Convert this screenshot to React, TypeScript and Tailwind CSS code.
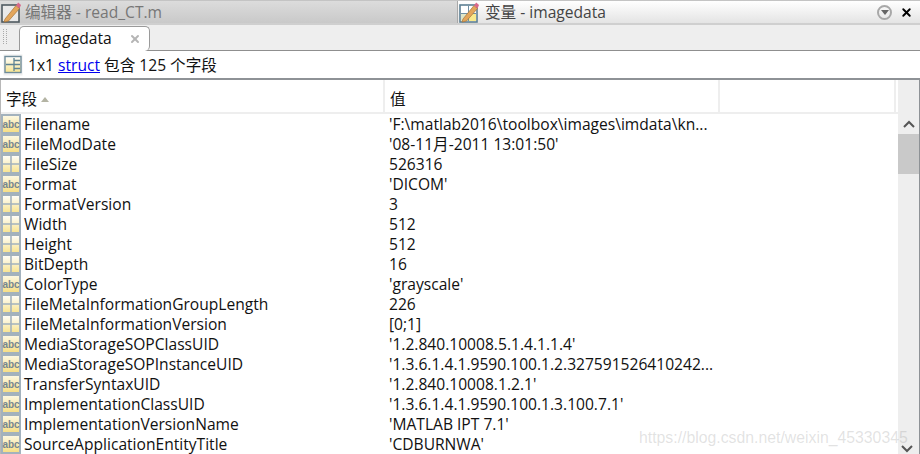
import { X } from 'lucide-react';

const font = { fontFamily: '"Open Sans", "Noto Sans CJK SC", sans-serif' };

// Variable rows: type decides which icon is drawn
const rows = [
  { name: 'Filename', value: "'F:\\matlab2016\\toolbox\\images\\imdata\\kn...", type: 'abc' },
  { name: 'FileModDate', value: "'08-11月-2011 13:01:50'", type: 'abc' },
  { name: 'FileSize', value: '526316', type: 'num' },
  { name: 'Format', value: "'DICOM'", type: 'abc' },
  { name: 'FormatVersion', value: '3', type: 'num' },
  { name: 'Width', value: '512', type: 'num' },
  { name: 'Height', value: '512', type: 'num' },
  { name: 'BitDepth', value: '16', type: 'num' },
  { name: 'ColorType', value: "'grayscale'", type: 'abc' },
  { name: 'FileMetaInformationGroupLength', value: '226', type: 'num' },
  { name: 'FileMetaInformationVersion', value: '[0;1]', type: 'num' },
  { name: 'MediaStorageSOPClassUID', value: "'1.2.840.10008.5.1.4.1.1.4'", type: 'abc' },
  { name: 'MediaStorageSOPInstanceUID', value: "'1.3.6.1.4.1.9590.100.1.2.327591526410242...", type: 'abc' },
  { name: 'TransferSyntaxUID', value: "'1.2.840.10008.1.2.1'", type: 'abc' },
  { name: 'ImplementationClassUID', value: "'1.3.6.1.4.1.9590.100.1.3.100.7.1'", type: 'abc' },
  { name: 'ImplementationVersionName', value: "'MATLAB IPT 7.1'", type: 'abc' },
  { name: 'SourceApplicationEntityTitle', value: "'CDBURNWA'", type: 'abc' },
];

function AbcIcon() {
  return (
    <svg width="20" height="20" viewBox="0 0 20 20" className="shrink-0">
      <defs>
        <linearGradient id="abcfill" x1="0" y1="0" x2="0" y2="1">
          <stop offset="0" stopColor="#fdf9e6" />
          <stop offset="1" stopColor="#f6dd80" />
        </linearGradient>
      </defs>
      <rect x="1" y="1" width="18" height="18" fill="url(#abcfill)" stroke="#a3b2bd" strokeWidth="2" />
      <text x="10" y="14" textAnchor="middle" fontSize="10" fontWeight="700" fill="#76868f" fontFamily="Liberation Sans, sans-serif">abc</text>
    </svg>
  );
}

function GridIcon() {
  return (
    <svg width="20" height="20" viewBox="0 0 20 20" className="shrink-0">
      <defs>
        <linearGradient id="gridfill" x1="0" y1="0" x2="0" y2="1">
          <stop offset="0" stopColor="#ffffff" />
          <stop offset="1" stopColor="#f8e38c" />
        </linearGradient>
      </defs>
      <rect x="1" y="1" width="18" height="18" fill="url(#gridfill)" stroke="#a3b2bd" strokeWidth="2" />
      <path d="M10 2v16M2 10h16" stroke="#a3b2bd" strokeWidth="1.6" />
    </svg>
  );
}

function StructIcon() {
  return (
    <svg width="20" height="22" viewBox="0 0 20 22" className="shrink-0">
      <defs>
        <linearGradient id="structfill" x1="0" y1="0" x2="0" y2="1">
          <stop offset="0" stopColor="#ffffff" />
          <stop offset="1" stopColor="#f8e48e" />
        </linearGradient>
      </defs>
      <rect x="0.5" y="0.5" width="19" height="21" fill="#eeeeee" />
      <rect x="2" y="2.5" width="16" height="16" fill="url(#structfill)" stroke="#6f8c9a" strokeWidth="1.4" />
      <path d="M11 4v13M3 10.5h8M11 6.5h6M11 10.5h6M11 14.5h6" stroke="#5f8494" strokeWidth="1.3" fill="none" />
    </svg>
  );
}

function EditorIcon() {
  return (
    <svg width="20" height="22" viewBox="0 0 20 22" className="shrink-0">
      <rect x="1" y="4" width="17" height="17" fill="#e9e9e9" stroke="#4f5a61" strokeWidth="1.6" />
      <path d="M4 18 L15 4.5 L18.5 7.5 L7.5 20 L3 21 Z" fill="#e3a65c" stroke="#a77436" strokeWidth="0.7" />
      <path d="M15 4.5 L17.2 1.5 L20 4 L18.5 7.5 Z" fill="#d9688a" />
    </svg>
  );
}

function VariableIcon() {
  return (
    <svg width="20" height="22" viewBox="0 0 20 22" className="shrink-0">
      <rect x="1" y="4" width="17" height="17" fill="#ffffff" stroke="#5d7f93" strokeWidth="1.6" />
      <rect x="10" y="13" width="7" height="7" fill="#f8e98c" />
      <rect x="2" y="13" width="8" height="7" fill="#dfe6c8" />
      <path d="M9.5 5v15M2 12.5h15" stroke="#6f8fa3" strokeWidth="1" />
      <path d="M4 18 L15 4.5 L18.5 7.5 L7.5 20 L3 21 Z" fill="#e3a65c" stroke="#a77436" strokeWidth="0.7" />
      <path d="M15 4.5 L17.2 1.5 L20 4 L18.5 7.5 Z" fill="#d9688a" />
    </svg>
  );
}

export default function App() {
  return (
    <div className="relative w-[920px] h-[454px] overflow-hidden bg-white flex flex-col text-[15.6px] text-[#111]" style={font}>
      {/* Title bars */}
      <div className="h-[25px] flex shrink-0 border-t border-[#c4c4c4] border-b-2 border-b-[#cfcfcf]">
        <div className="w-[458px] flex items-center gap-[4px] pl-[1px] bg-gradient-to-b from-[#dcdcdc] to-[#c9c9c9] border-r border-[#a8a8a8] text-[#777]">
          <EditorIcon />
          <span className="pt-[2px]">编辑器 - read_CT.m</span>
        </div>
        <div className="flex-1 flex items-center pl-[1px] bg-gradient-to-b from-white to-[#e4e4e4] text-[#444]">
          <VariableIcon />
          <span className="ml-[6px] pt-[2px]">变量 - imagedata</span>
          <div className="ml-auto flex items-center gap-[8px] pr-[7px]">
            <div className="w-[15px] h-[15px] rounded-full border-2 border-[#a8a8a8] flex items-center justify-center">
              <div className="w-0 h-0 border-l-[4px] border-r-[4px] border-t-[5px] border-l-transparent border-r-transparent border-t-[#666]" />
            </div>
            <X className="w-[13px] h-[13px] text-black" strokeWidth={3.5} />
          </div>
        </div>
      </div>

      {/* Document tabs */}
      <div className="h-[26px] shrink-0 flex items-end bg-[#eeeeee] border-b border-[#8f8f8f] pl-[3px]">
        <div className="w-[4px] h-[15px] mb-[6px] mr-[12px] border-x border-dotted border-[#aaa]" />
        <div className="w-[131px] h-[25px] -mb-px flex items-center bg-white border border-b-0 border-[#9a9a9a] rounded-t-[5px] rounded-br-[5px] pl-[15px]">
          <span>imagedata</span>
          <X className="w-[12px] h-[12px] ml-[17px] text-[#b5b5b5]" strokeWidth={4} />
        </div>
      </div>

      {/* Summary line */}
      <div className="h-[29px] shrink-0 flex items-center pl-[3px] gap-[5px] bg-white border-b-2 border-[#8e9296]">
        <StructIcon />
        <span className="pt-[2px]">
          1x1 <span className="text-[#0000ee] underline">struct</span> 包含 125 个字段
        </span>
      </div>

      {/* Table */}
      <div className="flex-1 min-h-0 flex border-r border-[#8e9296] border-l border-l-[#b8b8b8]">
        <div className="w-[897px] min-w-0 flex flex-col">
          <div className="h-[34px] shrink-0 flex border-b-2 border-[#eeeeee]">
            <div className="w-[384px] flex items-center pl-[5px] pt-[7px] gap-[4px] border-r-2 border-[#eeeeee]">
              <span>字段</span>
              <div className="w-0 h-0 border-l-[4px] border-r-[4px] border-b-[5px] border-l-transparent border-r-transparent border-b-[#b4b4a4]" />
            </div>
            <div className="w-[335px] flex items-center pl-[5px] pt-[7px] border-r-2 border-[#eeeeee]">值</div>
            <div className="w-[176px] border-r-2 border-[#eeeeee]" />
          </div>
          {rows.map((row) => (
            <div key={row.name} className="h-[20px] shrink-0 flex items-center whitespace-nowrap">
              <div className="w-[384px] flex items-center gap-[3px]">
                {row.type === 'abc' ? <AbcIcon /> : <GridIcon />}
                <span className="pt-[2px]">{row.name}</span>
              </div>
              <span className="pl-[4px] pt-[2px]">{row.value}</span>
            </div>
          ))}
        </div>
        {/* Scrollbar */}
        <div className="flex-1 bg-[#eeeeee] flex flex-col items-center relative">
          <svg width="12" height="8" viewBox="0 0 12 8" className="mt-[40px] shrink-0">
            <path d="M1 7l5-5 5 5" fill="none" stroke="#555" strokeWidth="2" />
          </svg>
          <div className="w-full h-[40px] mt-[6px] bg-[#c9c9c9]" />
          <svg width="12" height="8" viewBox="0 0 12 8" className="absolute bottom-[1px] left-[3px]">
            <path d="M1 1l5 5 5-5" fill="none" stroke="#555" strokeWidth="2" />
          </svg>
        </div>
      </div>
      <div className="absolute left-[639px] top-[426px] text-[15.8px] text-[#8c8c8c]/25 font-['Liberation_Sans',sans-serif]">
        https://blog.csdn.net/weixin_45330345
      </div>
    </div>
  );
}
